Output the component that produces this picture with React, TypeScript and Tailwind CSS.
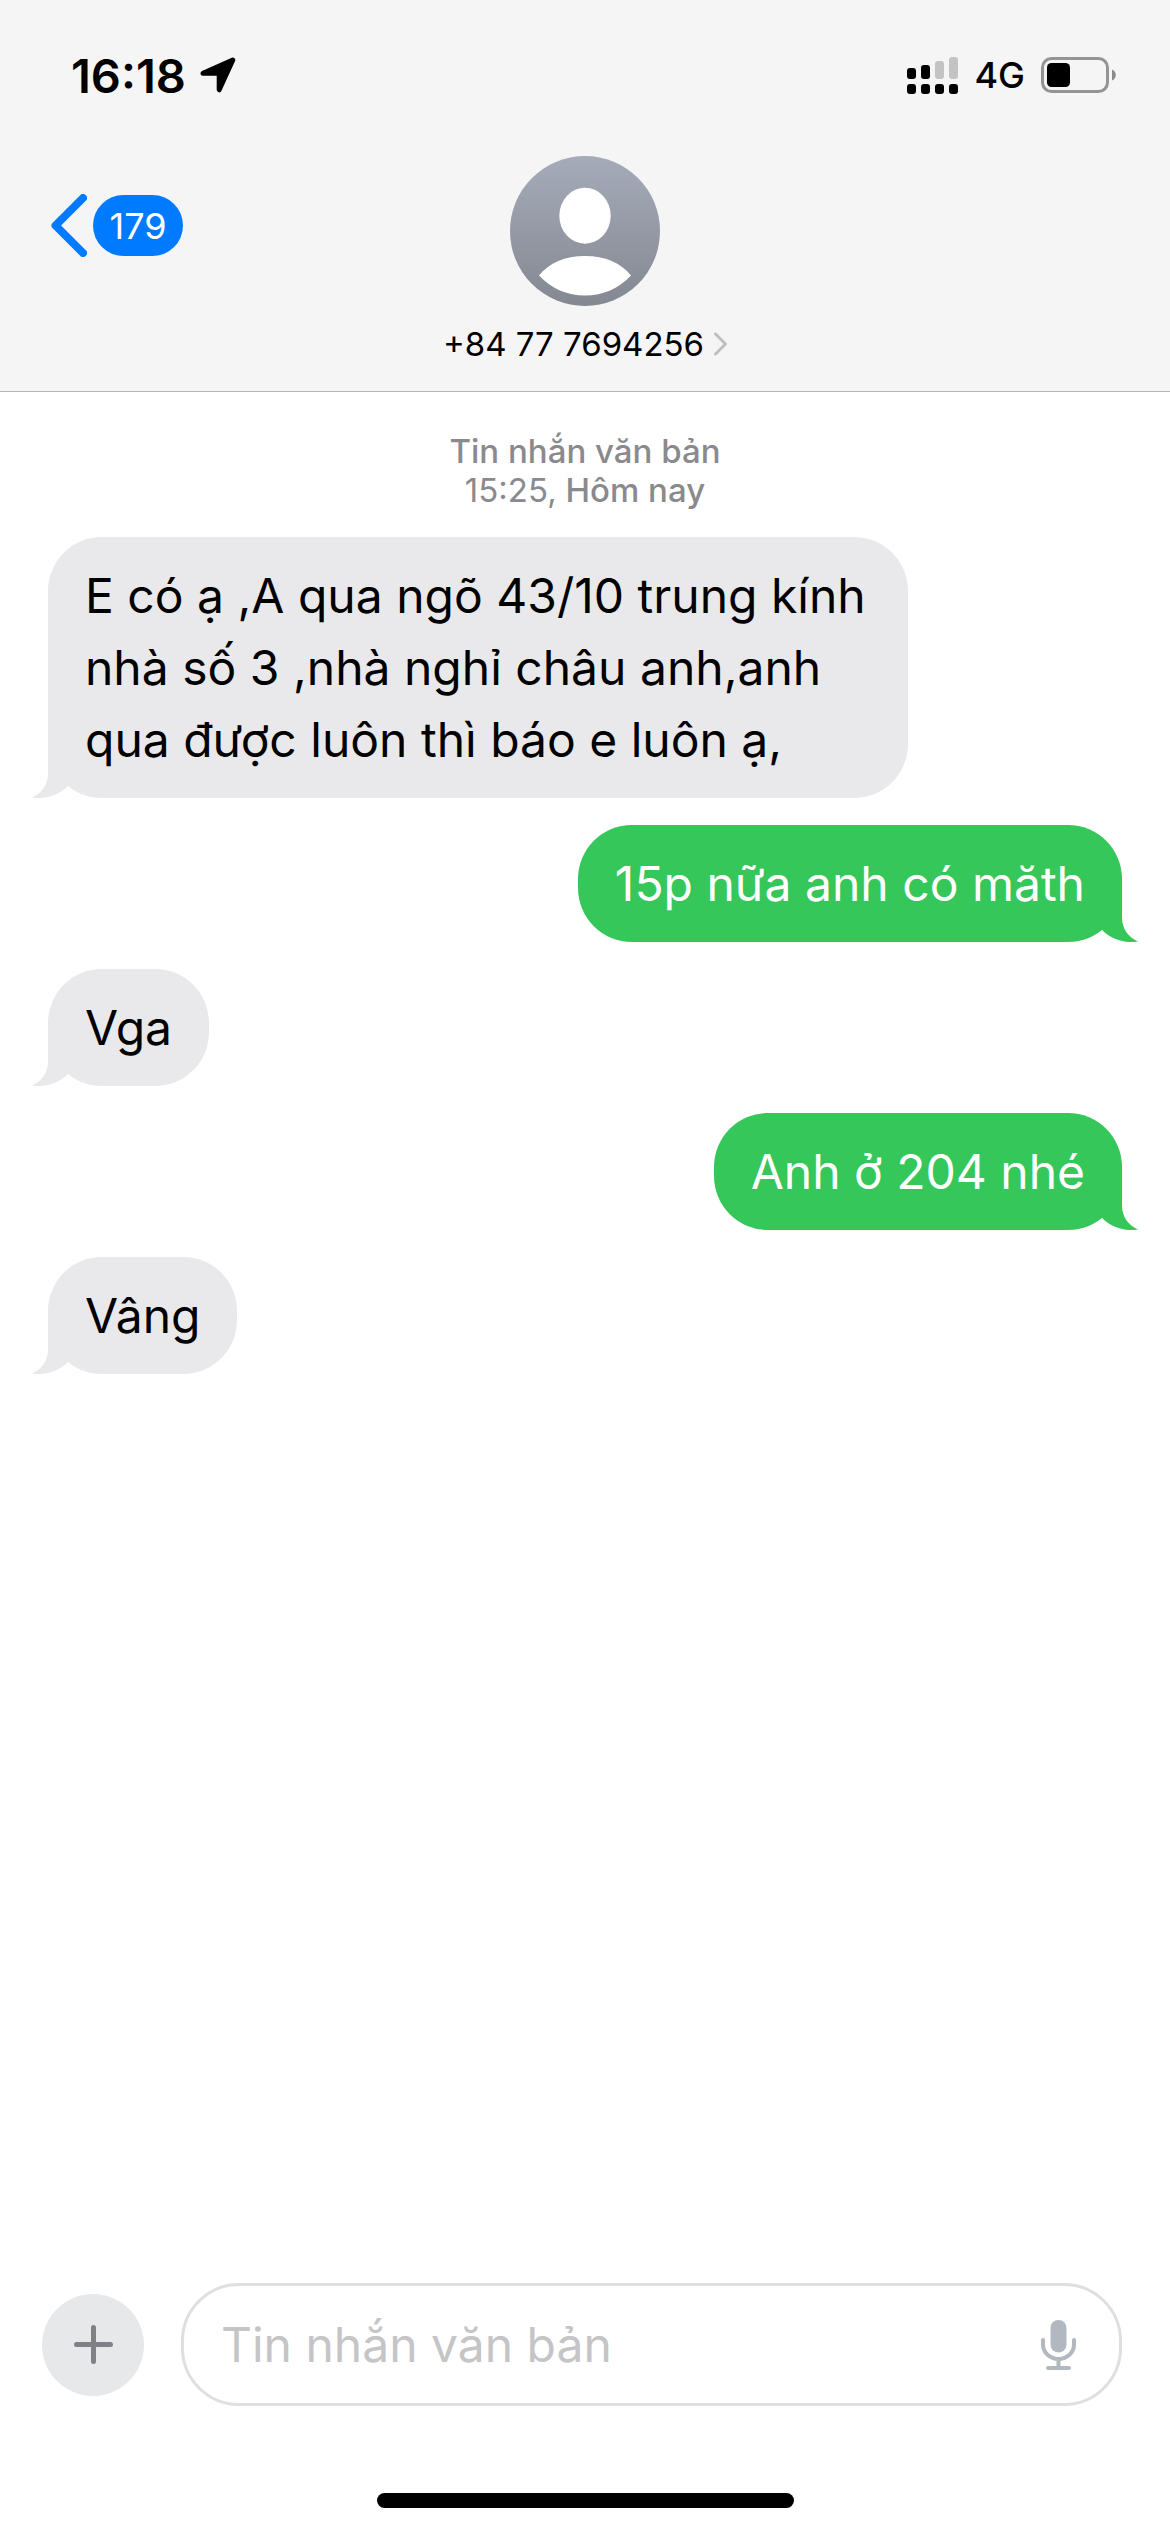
type MessageItem = {
  id: number;
  text: string;
  sent: boolean;
};

const messages: MessageItem[] = [
  {
    id: 1,
    text: "E có ạ ,A qua ngõ 43/10 trung kính nhà số 3 ,nhà nghỉ châu anh,anh qua được luôn thì báo e luôn ạ,",
    sent: false,
  },
  { id: 2, text: "15p nữa anh có măth", sent: true },
  { id: 3, text: "Vga", sent: false },
  { id: 4, text: "Anh ở 204 nhé", sent: true },
  { id: 5, text: "Vâng", sent: false },
];

const LocationArrow = () => (
  <svg width="36" height="36" viewBox="0 0 36 36" aria-hidden="true">
    <path
      d="M3 16.2 32.8 3 19.2 32.8V16.2Z"
      fill="#000"
      stroke="#000"
      strokeWidth="5"
      strokeLinejoin="round"
    />
  </svg>
);

const DualSignal = () => (
  <svg width="51" height="37" viewBox="0 0 51 37" aria-hidden="true">
    <g fill="#000">
      <rect x="0" y="11" width="9" height="11" rx="3" />
      <rect x="14" y="8" width="9" height="14" rx="3" />
      <rect x="0" y="27" width="9" height="10" rx="3" />
      <rect x="14" y="27" width="9" height="10" rx="3" />
      <rect x="28" y="27" width="9" height="10" rx="3" />
      <rect x="42" y="27" width="9" height="10" rx="3" />
    </g>
    <g fill="#c3c3c3">
      <rect x="28" y="4" width="9" height="18" rx="3" />
      <rect x="42" y="0" width="9" height="22" rx="3" />
    </g>
  </svg>
);

const Battery = () => (
  <svg width="75" height="36" viewBox="0 0 75 36" aria-hidden="true">
    <rect x="1.5" y="1.5" width="65" height="33" rx="9" fill="none" stroke="#949494" strokeWidth="3" />
    <rect x="6" y="6" width="23" height="24" rx="4.5" fill="#000" />
    <path d="M71 12.5c5 2 5 9 0 11Z" fill="#8a8a8a" />
  </svg>
);

const Avatar = () => (
  <svg width="150" height="150" viewBox="0 0 150 150" aria-hidden="true">
    <defs>
      <linearGradient id="avatar" x1="0" y1="0" x2="0" y2="1">
        <stop offset="0" stopColor="#a5abb9" />
        <stop offset="1" stopColor="#848892" />
      </linearGradient>
    </defs>
    <circle cx="75" cy="75" r="75" fill="url(#avatar)" />
    <ellipse cx="75" cy="59.7" rx="25.7" ry="28" fill="#fff" />
    <path
      d="M29 119.5C39 107 55 100 75 100s36 7 46 19.500C109 132.500 93 139.500 75 139.500S41 132.500 29 119.500Z"
      fill="#fff"
    />
  </svg>
);

const Mic = () => (
  <svg width="35" height="50" viewBox="0 0 35 50" aria-hidden="true">
    <rect x="9.500" y="0" width="16" height="32.500" rx="8" fill="#b2b8bf" />
    <path
      d="M2 20v4.500a15.500 14.500 0 0 0 31 0V20M17.500 39v9M7 48h21"
      fill="none"
      stroke="#b2b8bf"
      strokeWidth="4"
      strokeLinecap="round"
    />
  </svg>
);

const Tail = ({ sent }: { sent: boolean }) => (
  <svg
    width="36"
    height="60"
    viewBox="0 0 36 60"
    aria-hidden="true"
    className={
      sent
        ? "absolute -right-4 bottom-0 -scale-x-100 text-[#35c759]"
        : "absolute -left-4 bottom-0 text-[#e9e9eb]"
    }
  >
    <path
      d="M16 0V36C16 47 9 55.500 0 59.500C12 61.500 26 58 35.500 48.500L36 0Z"
      fill="currentColor"
    />
  </svg>
);

const Bubble = ({ text, sent }: MessageItem) => (
  <li className={sent ? "flex justify-end" : "flex justify-start"}>
    <div
      className={
        sent
          ? "relative max-w-[860px] rounded-[54px] bg-[#35c759] px-[37px] pt-[23px] pb-[22px] text-white"
          : "relative max-w-[860px] rounded-[54px] bg-[#e9e9eb] px-[37px] pt-[23px] pb-[22px] text-black"
      }
    >
      <Tail sent={sent} />
      <p className="relative text-[48px] leading-[72px]">{text}</p>
    </div>
  </li>
);

const App = () => {
  return (
    <div className="flex min-h-screen flex-col bg-white font-['Inter',sans-serif] text-black">
      {/* Header */}
      <header className="border-b border-[#b3b3b3] bg-[#f5f5f5]">
        <div className="flex h-[150px] items-center justify-between pr-[54px] pl-[71px]">
          <div className="flex items-center gap-[14px]">
            <span className="text-[47px] leading-none font-semibold">16:18</span>
            <LocationArrow />
          </div>
          <div className="flex items-center gap-4">
            <DualSignal />
            <span className="text-[36px] leading-none font-medium">4G</span>
            <Battery />
          </div>
        </div>

        <div className="grid grid-cols-[1fr_auto_1fr] items-start pt-[6px] pb-[25px]">
          <button type="button" aria-label="Back, 179 unread" className="mt-[38px] ml-[51px] flex items-center gap-[6px]">
            <svg width="36" height="63" viewBox="0 0 36 63" aria-hidden="true">
              <path
                d="M32 4 4.500 31.500 32 59"
                fill="none"
                stroke="#007aff"
                strokeWidth="8"
                strokeLinecap="round"
                strokeLinejoin="round"
              />
            </svg>
            <span className="flex h-[61px] w-[90px] items-center justify-center rounded-full bg-[#007aff] text-[36px] text-white">
              179
            </span>
          </button>

          <button type="button" className="flex flex-col items-center">
            <Avatar />
            <span className="mt-4 flex items-center gap-[10px] text-[33px] leading-[44px]">
              +84 77 7694256
              <svg width="13" height="24" viewBox="0 0 13 24" aria-hidden="true">
                <path
                  d="M1.500 2 11.500 12 1.500 22"
                  fill="none"
                  stroke="#bfbfc1"
                  strokeWidth="3"
                  strokeLinecap="round"
                  strokeLinejoin="round"
                />
              </svg>
            </span>
          </button>
        </div>
      </header>

      {/* Conversation */}
      <main className="flex-1 px-12 pt-10">
        <p className="text-center text-[33px] leading-[39px] font-medium text-[#8a8a8e]">
          Tin nhắn văn bản
          <br />
          <span className="font-normal">15:25,</span> Hôm nay
        </p>
        <ul className="mt-[27px] flex flex-col gap-[27px]">
          {messages.map((message) => (
            <Bubble key={message.id} {...message} />
          ))}
        </ul>
      </main>

      {/* Composer */}
      <footer>
        <form className="flex items-center gap-[37px] pr-12 pl-[42px]">
          <button
            type="button"
            aria-label="Add"
            className="flex size-[102px] shrink-0 items-center justify-center rounded-full bg-[#e7e8ea]"
          >
            <svg width="39" height="39" viewBox="0 0 39 39" aria-hidden="true">
              <path d="M19.500 2.500v34M2.500 19.500h34" stroke="#808087" strokeWidth="5" strokeLinecap="round" />
            </svg>
          </button>
          <div className="flex h-[123px] min-w-0 flex-1 items-center rounded-[58px] border-3 border-[#dfdfe0] pr-[43px] pl-[37px]">
            <input
              type="text"
              aria-label="Tin nhắn văn bản"
              placeholder="Tin nhắn văn bản"
              className="min-w-0 flex-1 text-[48px] leading-[72px] outline-none placeholder:text-[#c5c5c7]"
            />
            <button type="button" aria-label="Dictate">
              <Mic />
            </button>
          </div>
        </form>
        <div className="mx-auto mt-[87px] mb-6 h-[15px] w-[417px] rounded-full bg-black" />
      </footer>
    </div>
  );
};

export default App;
